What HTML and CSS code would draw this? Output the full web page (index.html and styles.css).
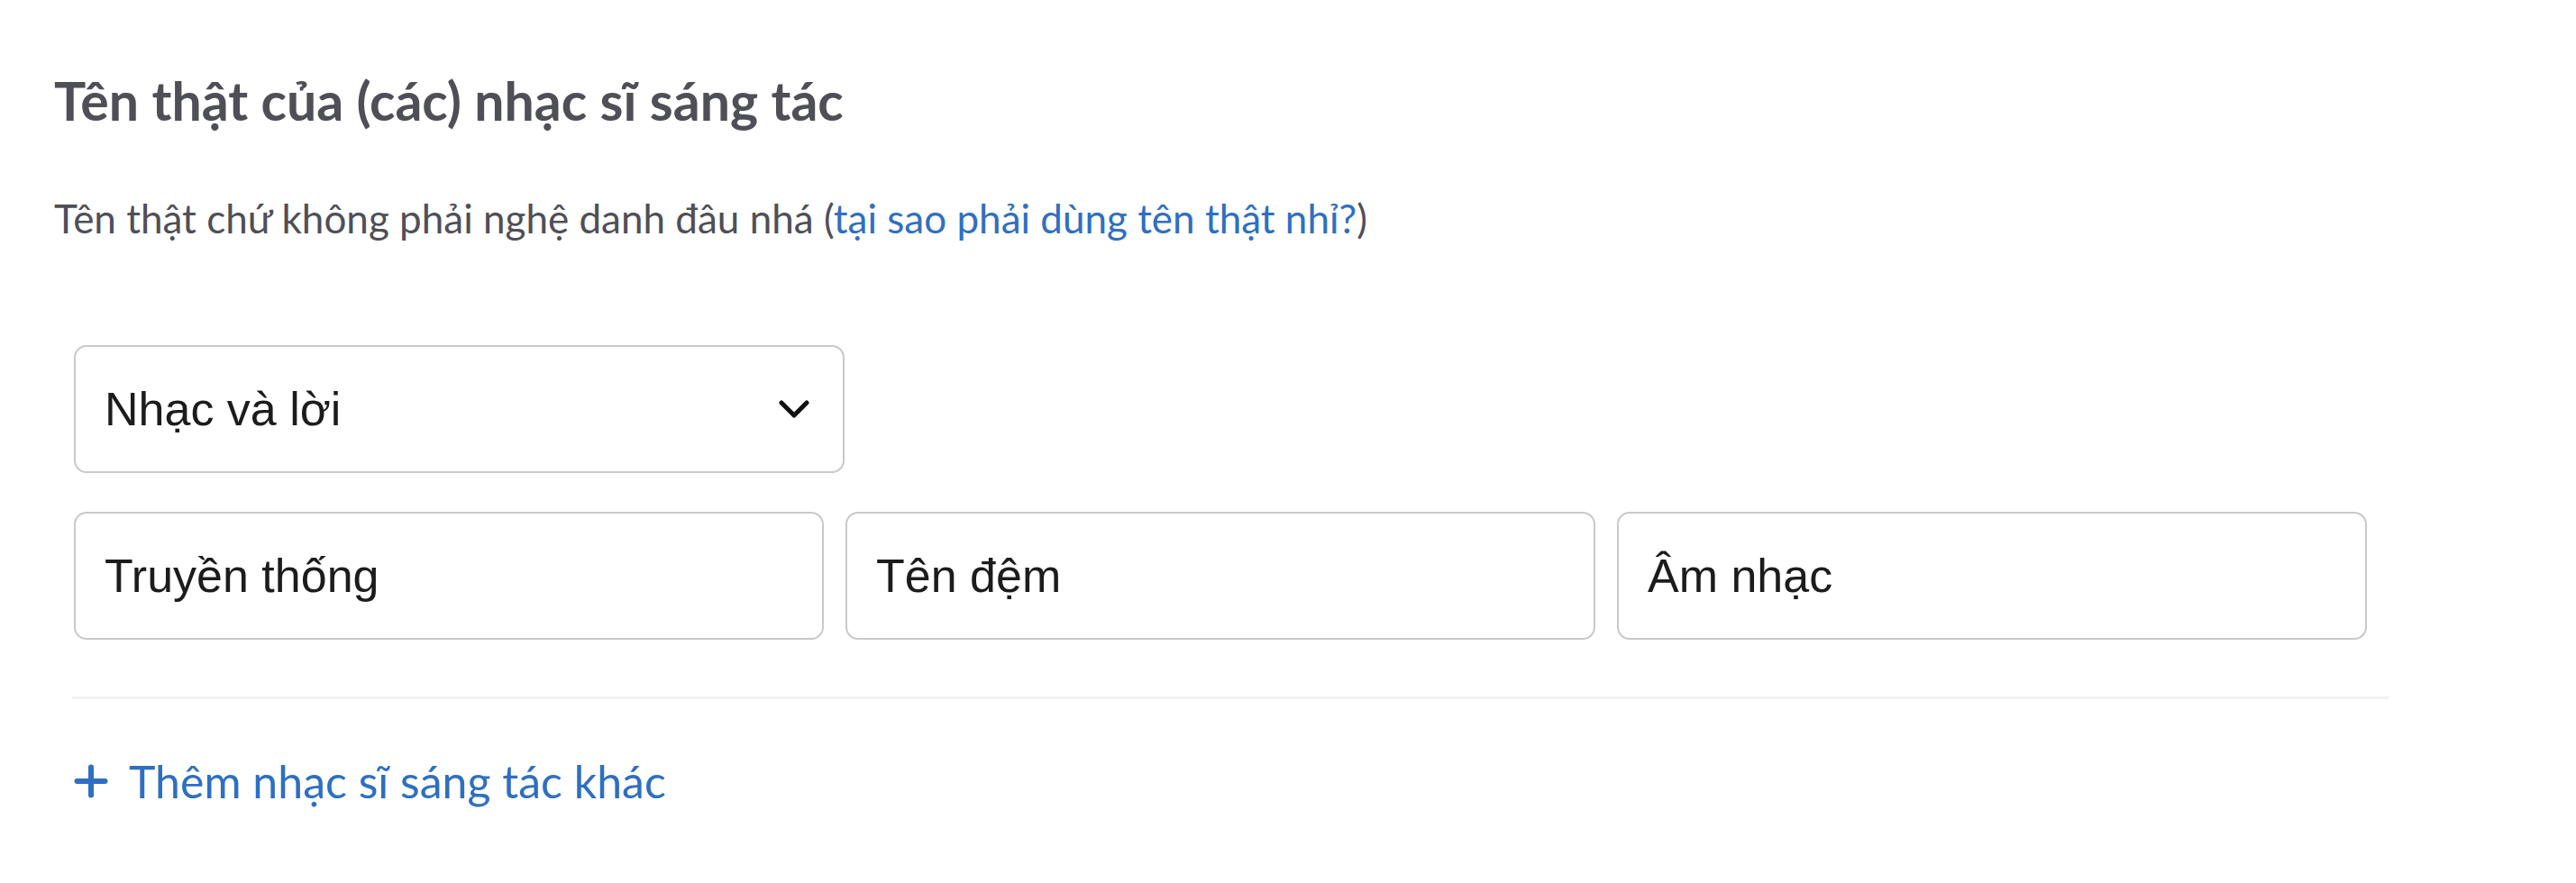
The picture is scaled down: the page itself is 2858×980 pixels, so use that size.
FILE: index.html
```html
<!DOCTYPE html>
<html lang="vi">
<head>
    <meta charset="UTF-8">
    <meta name="viewport" content="width=device-width, initial-scale=1.0">
    <title>Nhạc sĩ sáng tác</title>
    <link rel="stylesheet" href="styles.css">
</head>
<body>
    <div class="container">
        <h2 class="section-title">Tên thật của (các) nhạc sĩ sáng tác</h2>
        <p class="hint">Tên thật chứ không phải nghệ danh đâu nhá (<a href="#">tại sao phải dùng tên thật nhỉ?</a>)</p>

        <div class="writer">
            <div class="select-box">
                <span>Nhạc và lời</span>
                <svg class="chevron" width="34" height="20" viewBox="0 0 34 20">
                    <polyline points="3,3 17,17 31,3" fill="none" stroke="#111" stroke-width="5" stroke-linecap="round" stroke-linejoin="round"/>
                </svg>
            </div>

            <div class="name-row">
                <input type="text" class="field" value="Truyền thống">
                <input type="text" class="field" value="Tên đệm">
                <input type="text" class="field" value="Âm nhạc">
            </div>
        </div>

        <hr class="divider">

        <a href="#" class="add-writer">
            <svg class="plus" width="38" height="38" viewBox="0 0 38 38">
                <path d="M19 3.5 V34.5 M3.5 19 H34.5" stroke="#2f6fc1" stroke-width="6" stroke-linecap="round"/>
            </svg>
            <span>Thêm nhạc sĩ sáng tác khác</span>
        </a>
    </div>
</body>
</html>
```

FILE: styles.css
```css
body {
    margin: 0;
    padding: 0;
    background-color: #ffffff;
    font-family: Lato, "Noto Sans", sans-serif;
}

.container {
    padding: 77px 0 0 60px;
}

.section-title {
    margin: 0;
    font-size: 59px;
    font-weight: 700;
    line-height: 1.2;
    color: #4f4f57;
}

.hint {
    margin: 68px 0 0;
    font-size: 44px;
    line-height: 1.2;
    color: #4f4f57;
}

.hint a {
    color: #2f6fc1;
    text-decoration: none;
}

.writer {
    margin: 114px 0 0 22px;
}

.select-box {
    box-sizing: border-box;
    width: 855px;
    height: 142px;
    display: flex;
    align-items: center;
    justify-content: space-between;
    padding: 0 37px 0 32px;
    border: 2px solid #c9c9c9;
    border-radius: 14px;
    font-family: "Liberation Sans", Arial, sans-serif;
    font-size: 52px;
    color: #1c1c1c;
}

.name-row {
    display: grid;
    grid-template-columns: repeat(3, 832px);
    gap: 24px;
    margin-top: 43px;
}

.field {
    box-sizing: border-box;
    width: 100%;
    height: 142px;
    margin: 0;
    padding: 0 32px;
    border: 2px solid #c9c9c9;
    border-radius: 14px;
    font-family: "Liberation Sans", Arial, sans-serif;
    font-size: 52px;
    color: #1c1c1c;
    background: #fff;
    outline: none;
}

.divider {
    width: 2570px;
    height: 3px;
    margin: 63px 0 0 20px;
    border: none;
    background: #f2f2f2;
}

.add-writer {
    display: inline-flex;
    align-items: center;
    gap: 23px;
    margin: 61px 0 0 22px;
    font-size: 50px;
    line-height: 1.2;
    color: #2f6fc1;
    text-decoration: none;
}
```
